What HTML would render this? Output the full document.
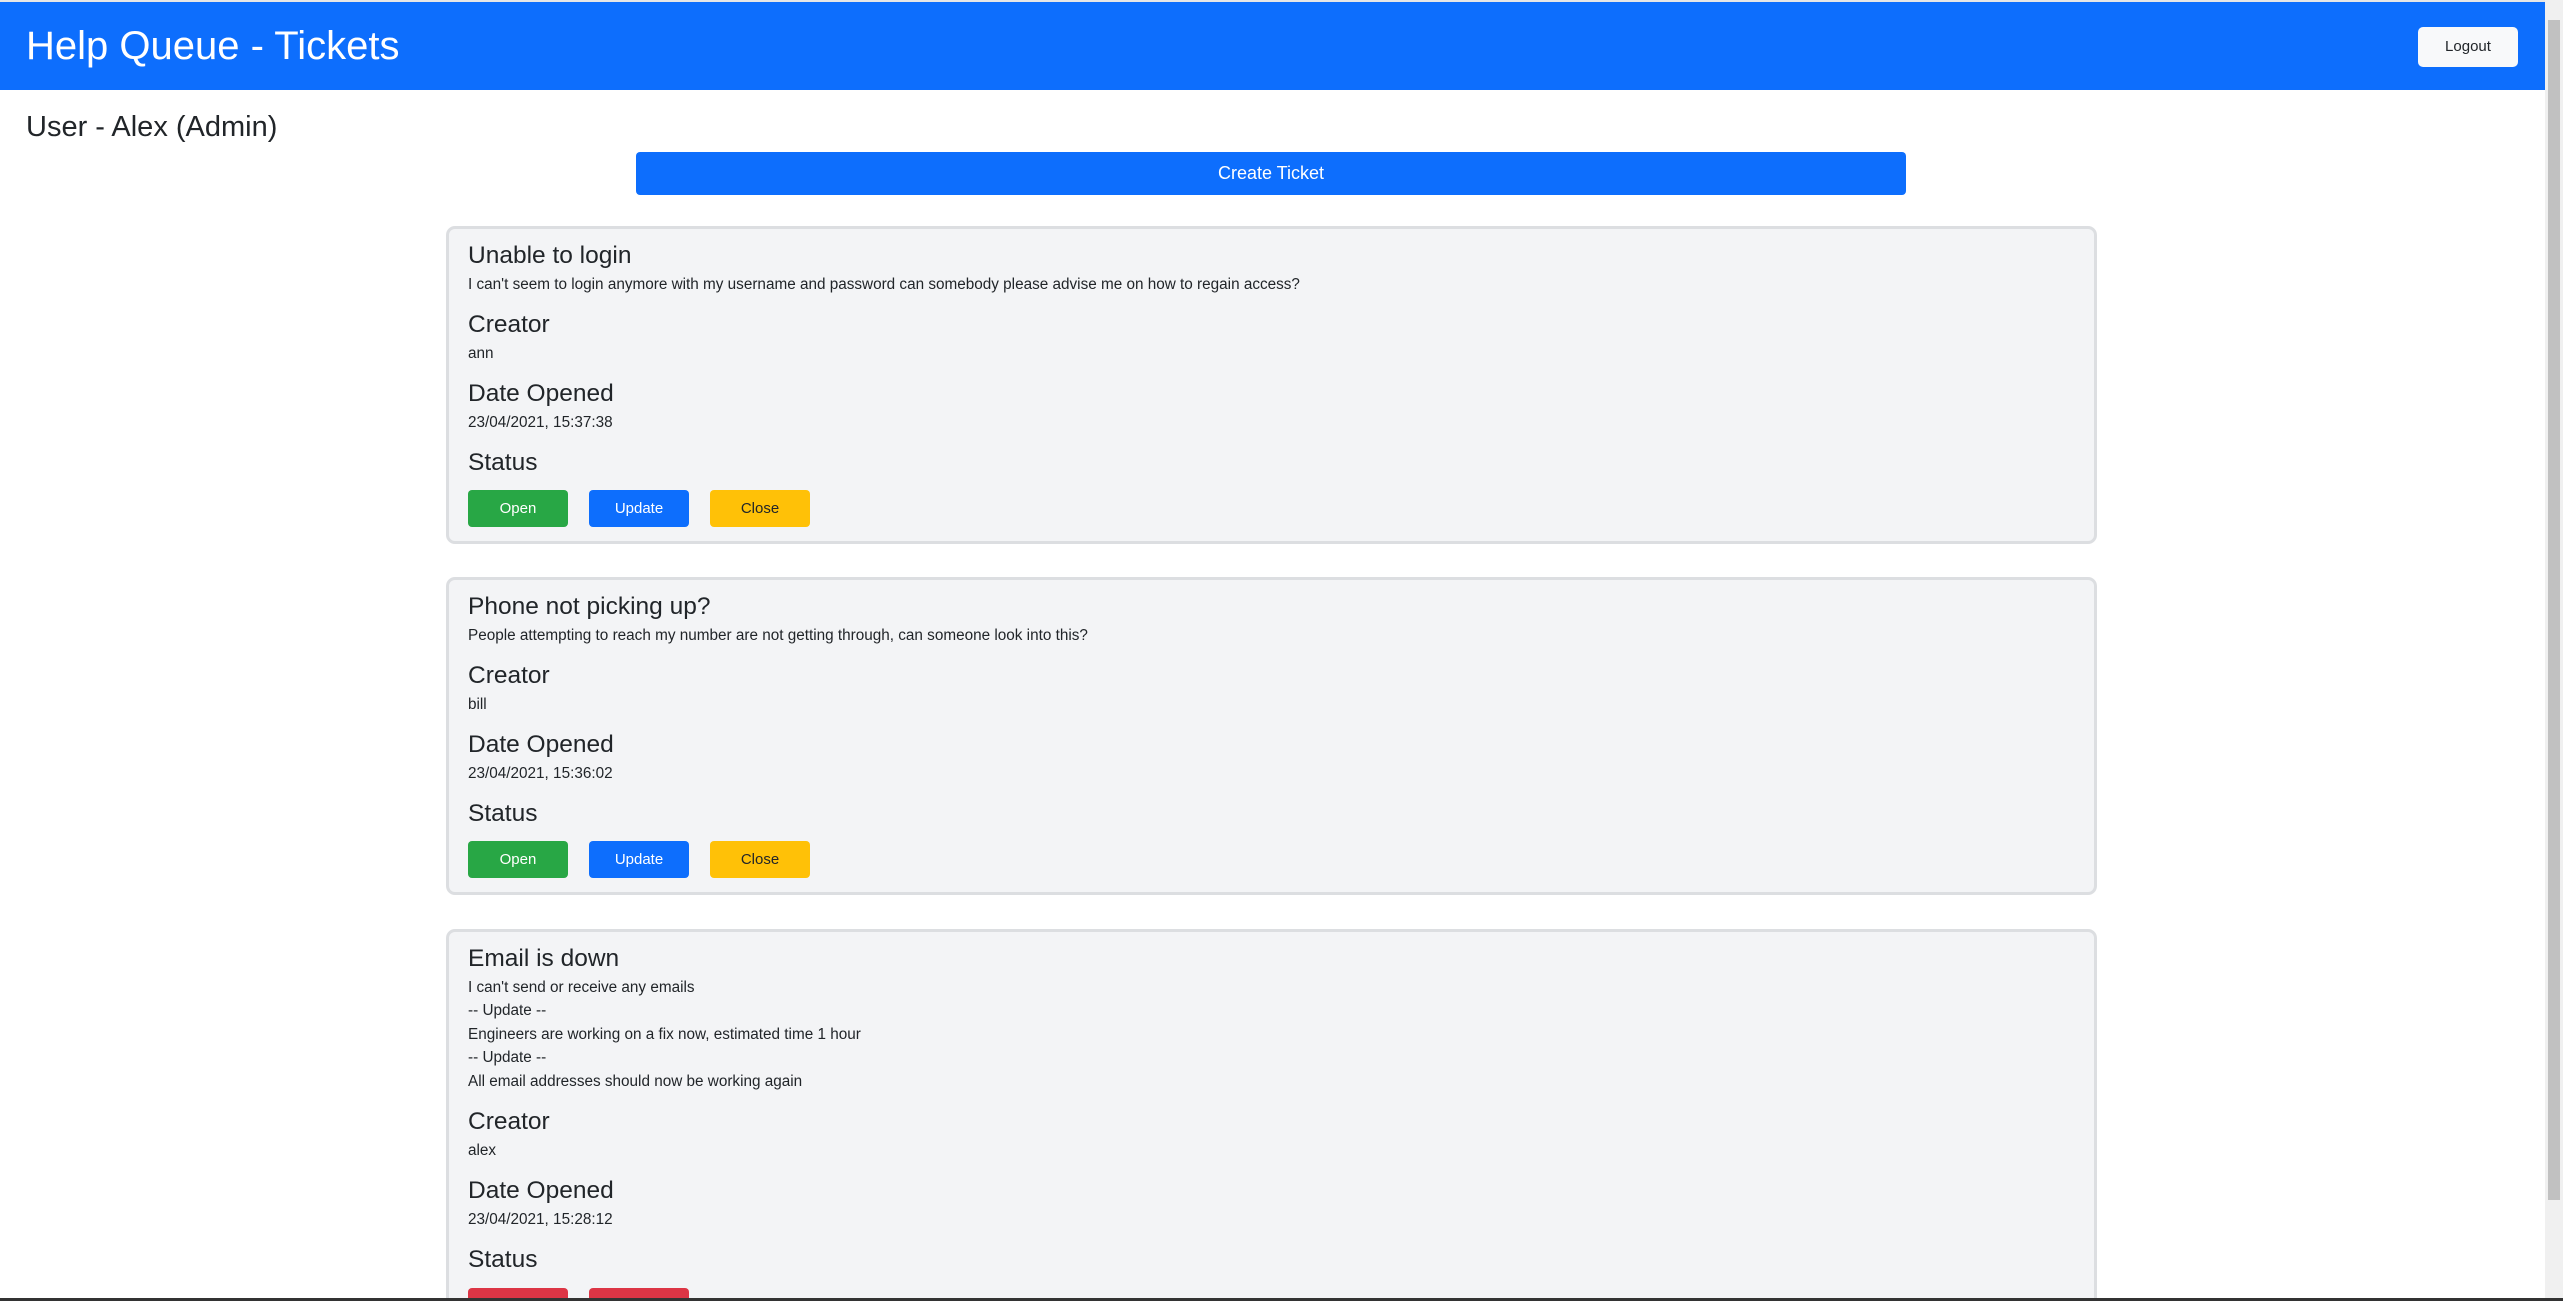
<!DOCTYPE html>
<html><head><meta charset="utf-8"><style>
*{box-sizing:border-box;margin:0;padding:0}
html,body{width:2563px;height:1301px;overflow:hidden;background:#fff;font-family:"Liberation Sans",sans-serif;color:#212529}
#wrap{position:relative;width:2563px;height:1301px;overflow:hidden}
.top{position:absolute;left:0;top:0;width:2545px;height:2px;background:#e6e6e6}
.nav{position:absolute;left:0;top:2px;width:2545px;height:88px;background:#0d6efd}
.nav h1{position:absolute;left:26px;top:20px;font-size:40px;font-weight:400;color:#fff;line-height:48px}
.logout{position:absolute;left:2418px;top:25px;width:100px;height:40px;background:#f8f9fa;border-radius:5px;font-size:15px;line-height:40px;text-align:center;color:#212529}
.user{position:absolute;left:26px;top:110px;font-size:29px;font-weight:400;line-height:34px}
.create{position:absolute;left:636px;top:152px;width:1270px;height:43px;background:#0d6efd;border-radius:4px;color:#fff;font-size:18px;line-height:43px;text-align:center}
.card{position:absolute;left:446px;width:1651px;background:#f3f4f6;border:3px solid #dcdee1;border-radius:9px;padding:11.5px 0 14px 19px}
.h{font-size:24.5px;font-weight:400;line-height:29px;height:29px}
.t{font-size:15.3px;line-height:29px;height:29px;margin-bottom:11px}
.tl{font-size:15.3px;line-height:23.6px}
.btns{margin-top:13.5px;height:37px;display:flex;gap:21px}
.b{width:100px;height:37px;border-radius:4px;font-size:15px;line-height:37px;text-align:center;color:#fff}
.g{background:#28a745}.bl{background:#0d6efd}.y{background:#ffc107;color:#212529}.r{background:#dc3545}
.sb{position:absolute;left:2545px;top:0;width:18px;height:1301px;background:#f0f0f0}
.th{position:absolute;left:2548px;top:20px;width:12px;height:1180px;background:#c1c1c1}
.bot{position:absolute;left:0;top:1298px;width:2563px;height:3px;background:#333}
</style></head><body><div id="wrap">
<div class="top"></div>
<div class="nav"><h1>Help Queue - Tickets</h1><div class="logout">Logout</div></div>
<div class="user">User - Alex (Admin)</div>
<div class="create">Create Ticket</div>

<div class="card" style="top:226px">
<div class="h">Unable to login</div>
<div class="t">I can't seem to login anymore with my username and password can somebody please advise me on how to regain access?</div>
<div class="h">Creator</div><div class="t">ann</div>
<div class="h">Date Opened</div><div class="t">23/04/2021, 15:37:38</div>
<div class="h">Status</div>
<div class="btns"><div class="b g">Open</div><div class="b bl">Update</div><div class="b y">Close</div></div>
</div>

<div class="card" style="top:577px">
<div class="h">Phone not picking up?</div>
<div class="t">People attempting to reach my number are not getting through, can someone look into this?</div>
<div class="h">Creator</div><div class="t">bill</div>
<div class="h">Date Opened</div><div class="t">23/04/2021, 15:36:02</div>
<div class="h">Status</div>
<div class="btns"><div class="b g">Open</div><div class="b bl">Update</div><div class="b y">Close</div></div>
</div>

<div class="card" style="top:929px">
<div class="h">Email is down</div>
<div style="margin-top:3px;margin-bottom:14px">
<div class="tl">I can't send or receive any emails</div>
<div class="tl">-- Update --</div>
<div class="tl">Engineers are working on a fix now, estimated time 1 hour</div>
<div class="tl">-- Update --</div>
<div class="tl">All email addresses should now be working again</div>
</div>
<div class="h">Creator</div><div class="t">alex</div>
<div class="h">Date Opened</div><div class="t">23/04/2021, 15:28:12</div>
<div class="h">Status</div>
<div class="btns"><div class="b r"></div><div class="b r"></div></div>
</div>

<div class="sb"></div><div class="th"></div>
<div class="bot"></div>
</div></body></html>
